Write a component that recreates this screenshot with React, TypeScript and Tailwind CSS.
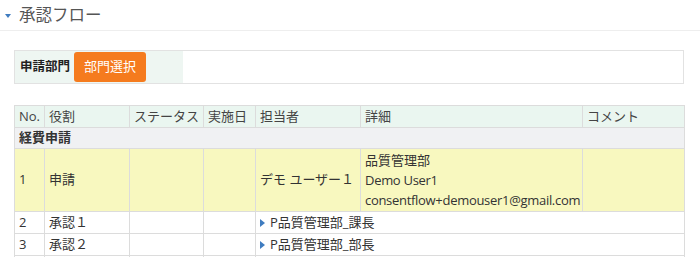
import React from 'react';

const FONT = "font-['Open_Sans','Noto_Sans_CJK_JP',sans-serif]";

const cols = [
  { label: 'No.', w: 'w-[30px]' },
  { label: '役割', w: 'w-[85px]' },
  { label: 'ステータス', w: 'w-[74px]' },
  { label: '実施日', w: 'w-[52px]' },
  { label: '担当者', w: 'w-[105px]' },
  { label: '詳細', w: 'w-[222px]' },
  { label: 'コメント', w: 'w-[102px]' },
];

const td = 'border border-[#dcdcdc] px-[4px] align-middle';

export default function App() {
  return (
    <div className={`w-[700px] h-[257px] overflow-hidden bg-white text-[13px] text-[#333] ${FONT}`}>
      {/* Heading */}
      <div className="flex items-center h-[31px] border-b border-[#eeeeee] pl-[5px]">
        <svg width="6" height="4" viewBox="0 0 6 4" className="mr-[8px] mt-[2px]">
          <polygon points="0,0 6,0 3,4" fill="#3f7cc0" />
        </svg>
        <span className="text-[16.5px] text-[#555]">承認フロー</span>
      </div>

      {/* Department box */}
      <div className="mx-[14px] mt-[19px] flex h-[34px] border border-[#e2e2e2] w-[670px]">
        <div className="flex items-center w-[168px] bg-[#eef6f2] pl-[5px] gap-[4px]">
          <span className="font-bold text-[12.5px] text-[#222]">申請部門</span>
          <button className="h-[30px] w-[72px] rounded-[3px] bg-[#f57b1e] text-white text-[13px]">部門選択</button>
        </div>
        <div className="flex-1 bg-white" />
      </div>

      {/* Table */}
      <table className="ml-[14px] mt-[21px] w-[670px] border-collapse table-fixed">
        <thead>
          <tr className="h-[22px] bg-[#eaf6f0]">
            {cols.map(c => (
              <th key={c.label} className={`${td} ${c.w} text-left font-normal text-[#444]`}>{c.label}</th>
            ))}
          </tr>
        </thead>
        <tbody>
          <tr className="h-[21px] bg-[#f0f1f3]">
            <td colSpan={7} className="border border-[#dcdcdc] px-[4px] font-bold text-[#333]">経費申請</td>
          </tr>
          <tr className="h-[62px] bg-[#f8f8bf]">
            <td className={td}>1</td>
            <td className={td}>申請</td>
            <td className={td}></td>
            <td className={td}></td>
            <td className={td}>デモ ユーザー１</td>
            <td className={`${td} leading-[20px] py-[1px]`}>
              <div>品質管理部</div>
              <div className="tracking-[-0.3px]">Demo User1</div>
              <div className="tracking-[-0.3px]">consentflow+demouser1@gmail.com</div>
            </td>
            <td className={td}></td>
          </tr>
          {[
            ['2', '承認１', 'P品質管理部_課長'],
            ['3', '承認２', 'P品質管理部_部長'],
            ['', '', ''],
          ].map(([n, role, who], i) => (
            <tr key={i} className="h-[22px] bg-white">
              <td className={td}>{n}</td>
              <td className={td}>{role}</td>
              <td className={td}></td>
              <td className={td}></td>
              <td colSpan={3} className="border border-[#dcdcdc] px-[4px]">
                {who && (
                  <span className="flex items-center gap-[5px]">
                    <svg width="5" height="8" viewBox="0 0 5 8">
                      <polygon points="0,0 5,4 0,8" fill="#3f7cc0" />
                    </svg>
                    {who}
                  </span>
                )}
              </td>
            </tr>
          ))}
        </tbody>
      </table>
    </div>
  );
}
